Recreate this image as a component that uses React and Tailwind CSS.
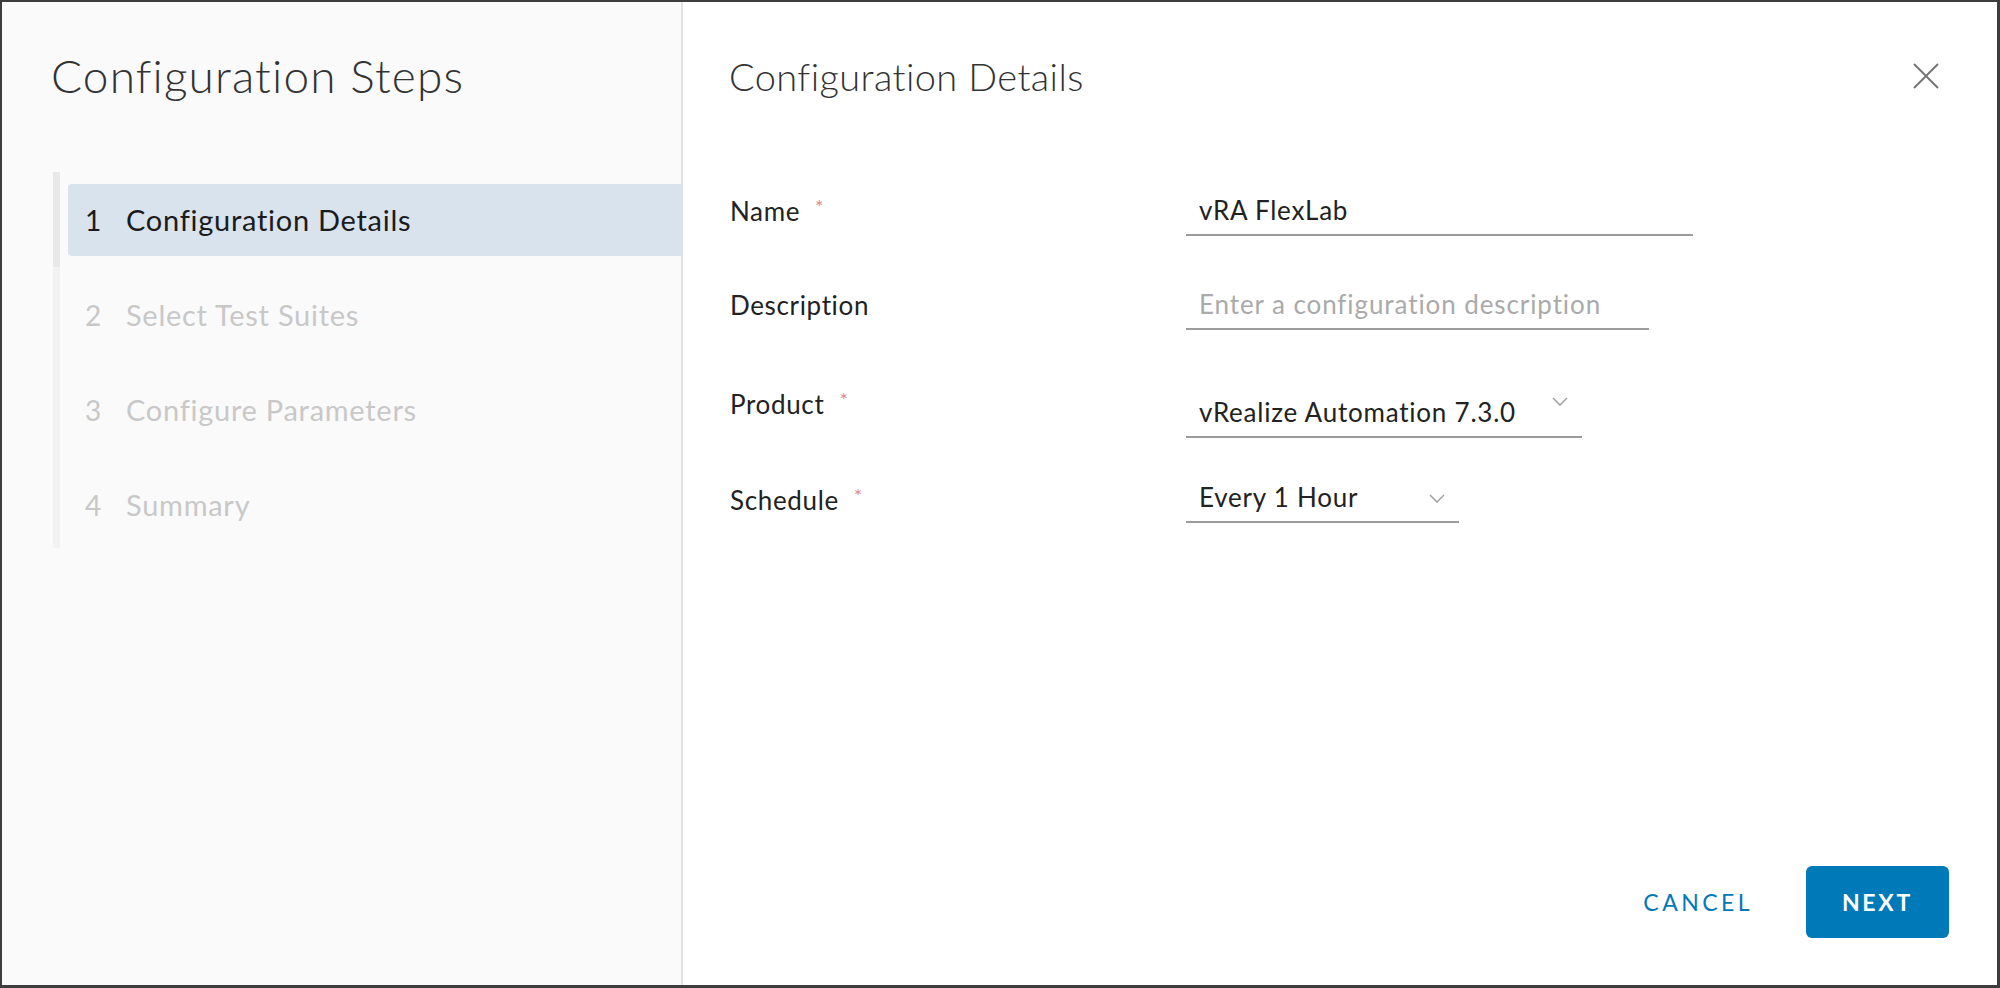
const steps = [
  { n: 1, label: "Configuration Details", active: true },
  { n: 2, label: "Select Test Suites" },
  { n: 3, label: "Configure Parameters" },
  { n: 4, label: "Summary" },
];

const fields = [
  {
    label: "Name",
    required: true,
    value: "vRA FlexLab",
    box: "w-[507px]",
    row: "mt-[87px]",
    shift: "",
  },
  {
    label: "Description",
    placeholder: "Enter a configuration description",
    box: "w-[463px]",
    row: "mt-[44px]",
    shift: "",
  },
  {
    label: "Product",
    required: true,
    value: "vRealize Automation 7.3.0",
    select: true,
    caret: "top-[9px] right-[14px]",
    box: "w-[396px]",
    row: "mt-[58px]",
    shift: "pb-[18px]",
  },
  {
    label: "Schedule",
    required: true,
    value: "Every 1 Hour",
    select: true,
    caret: "top-[21px] right-[14px]",
    box: "w-[273px]",
    row: "mt-[35px]",
    shift: "pt-[4px]",
  },
];

function Chevron() {
  return (
    <svg width="16" height="9" viewBox="0 0 16 9" fill="none">
      <polyline points="1,1 8,8 15,1" stroke="#9a9a9a" strokeWidth="1.4" />
    </svg>
  );
}

export default function App() {
  return (
    <div className="w-[2000px] h-[988px] flex bg-white border-t-2 border-l-2 border-r-[3px] border-b-[3px] border-[#3d3d3d] font-['Lato',sans-serif]">
      {/* steps sidebar */}
      <aside className="w-[681px] h-full bg-[#fafafa] border-r-2 border-[#e2e2e2] pt-[46px]">
        <h1 className="ml-[49px] text-[46px] leading-[55px] font-light tracking-[0.025em] text-[#333333]">
          Configuration Steps
        </h1>

        <div className="mt-[69px] ml-[51px] flex">
          <div className="w-[7px] flex flex-col">
            <div className="h-[95px] bg-[#e8e8e8]" />
            <div className="flex-1 bg-[#f2f2f2]" />
          </div>
          <ul className="flex-1 ml-[8px] pt-[12px] pb-[7px] flex flex-col gap-[23px]">
            {steps.map((s) => (
              <li
                key={s.n}
                className={
                  s.active
                    ? "h-[72px] pl-[17px] flex items-center rounded-l-[4px] bg-[#d8e3ee] text-[#1b1b1b]"
                    : "h-[72px] pl-[17px] flex items-center text-[#c8c8c8]"
                }
              >
                <span className="w-[41px] text-[28px]">{s.n}</span>
                <span className="text-[29px] tracking-[0.025em]">{s.label}</span>
              </li>
            ))}
          </ul>
        </div>
      </aside>

      {/* details */}
      <section className="flex-1 h-full flex flex-col">
        <header className="pt-[52px] pl-[46px] pr-[58px] flex justify-between items-start">
          <h2 className="text-[38px] leading-[45px] font-light tracking-[0.01em] text-[#333333]">
            Configuration Details
          </h2>
          <button className="mt-[9px]">
            <svg width="26" height="26" viewBox="0 0 26 26">
              <path d="M1 1 L25 25 M25 1 L1 25" stroke="#767676" strokeWidth="2" />
            </svg>
          </button>
        </header>

        <div className="pl-[47px] flex flex-col">
          {fields.map((f) => (
            <div key={f.label} className={`flex items-center ${f.row}`}>
              <div className={`w-[456px] h-[50px] flex items-center text-[26px] tracking-[0.025em] text-[#222222] ${f.shift}`}>
                {f.label}
                {f.required && (
                  <span className="ml-[15px] -mt-[10px] text-[20px] text-[#e08a8a]">*</span>
                )}
              </div>
              <div className={`relative h-[50px] border-b-2 border-[#9c9c9c] pl-[13px] flex items-center ${f.box}`}>
                {f.value ? (
                  <span className="text-[26px] tracking-[0.03em] text-[#222222]">{f.value}</span>
                ) : (
                  <span className="text-[26px] tracking-[0.035em] text-[#aaaaaa]">{f.placeholder}</span>
                )}
                {f.select && (
                  <span className={`absolute ${f.caret}`}>
                    <Chevron />
                  </span>
                )}
              </div>
            </div>
          ))}
        </div>

        <div className="flex-1" />

        <footer className="pr-[48px] pb-[47px] flex justify-end items-center gap-[53px]">
          <button className="text-[23px] tracking-[0.15em] text-[#0079b8]">CANCEL</button>
          <button className="w-[143px] h-[72px] rounded-[6px] bg-[#0079b8] text-white text-[23px] font-bold tracking-[0.12em]">
            NEXT
          </button>
        </footer>
      </section>
    </div>
  );
}
